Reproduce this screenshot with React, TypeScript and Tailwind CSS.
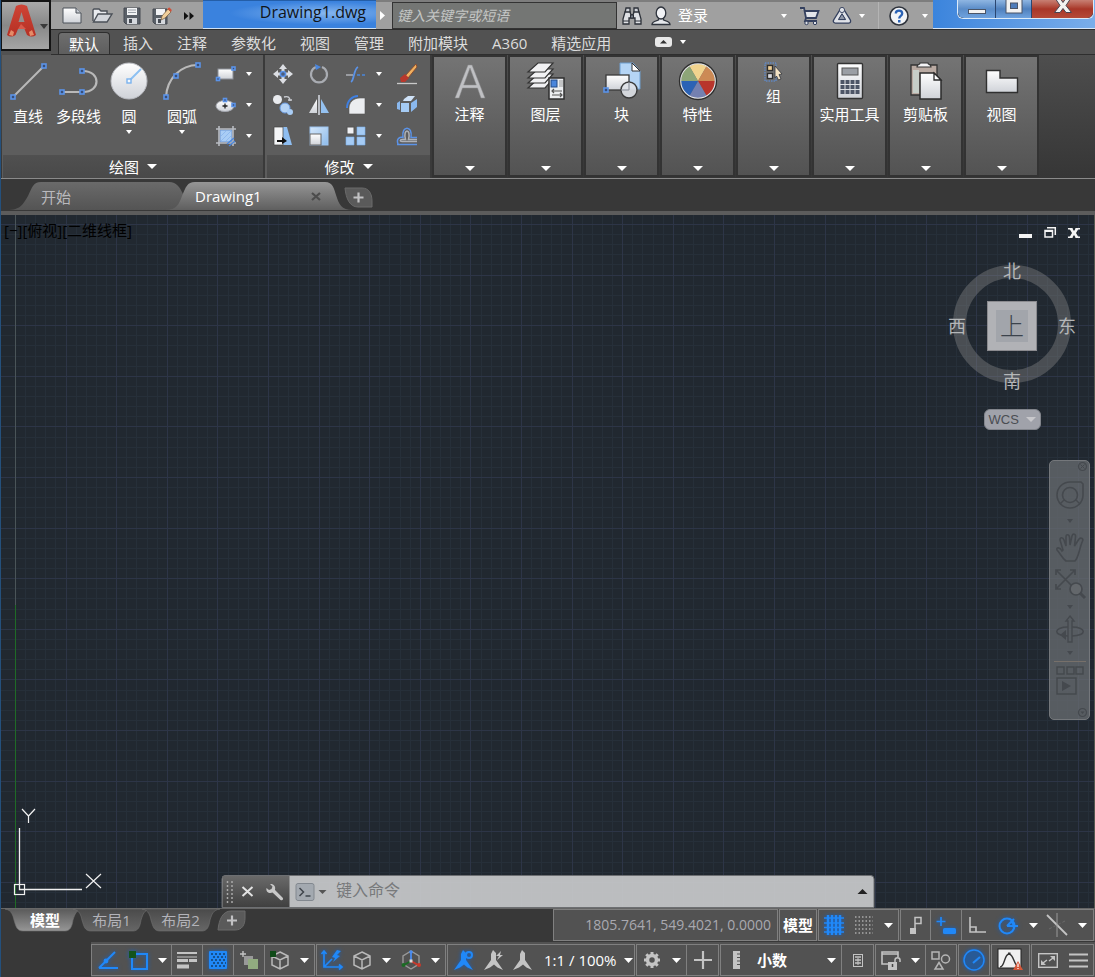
import React from "react";

type Kids = { children?: React.ReactNode };

/* ---------- shared drawing helpers ---------- */

function Pic({ w, h, children, glow }: Kids & { w: number; h: number; glow?: boolean }) {
  return (
    <svg
      width={w}
      height={h}
      viewBox={`0 0 ${w} ${h}`}
      fill="none"
      aria-hidden="true"
      className={glow ? "shrink-0 overflow-visible [filter:drop-shadow(0_0_2px_#1560c0)]" : "shrink-0 overflow-visible"}
    >
      {children}
    </svg>
  );
}

function Arrow({ w = 6, h = 4, fill = "#fff" }: { w?: number; h?: number; fill?: string }) {
  return (
    <Pic w={w} h={h}>
      <path d={`M0 0H${w}L${w / 2} ${h}Z`} fill={fill} />
    </Pic>
  );
}

function Defs() {
  return (
    <svg width="0" height="0" className="absolute" aria-hidden="true">
      <defs>
        <linearGradient id="paper" x1="0" y1="0" x2="0" y2="1">
          <stop offset="0" stopColor="#ffffff" />
          <stop offset="1" stopColor="#cfd2d8" />
        </linearGradient>
        <linearGradient id="sky" x1="0" y1="0" x2="1" y2="1">
          <stop offset="0" stopColor="#d6e8fb" />
          <stop offset="1" stopColor="#8dbbea" />
        </linearGradient>
        <linearGradient id="tab" x1="0" y1="0" x2="0" y2="1">
          <stop offset="0" stopColor="#6a6a6a" />
          <stop offset="1" stopColor="#545454" />
        </linearGradient>
        <linearGradient id="tabOn" x1="0" y1="0" x2="0" y2="1">
          <stop offset="0" stopColor="#969696" />
          <stop offset="1" stopColor="#5f5f5f" />
        </linearGradient>
        <linearGradient id="tabLow" x1="0" y1="0" x2="0" y2="1">
          <stop offset="0" stopColor="#5a5a5a" />
          <stop offset="1" stopColor="#969696" />
        </linearGradient>
        <linearGradient id="tabDim" x1="0" y1="0" x2="0" y2="1">
          <stop offset="0" stopColor="#4a4a4a" />
          <stop offset="1" stopColor="#666666" />
        </linearGradient>
        <linearGradient id="redA" x1="0" y1="0" x2="0" y2="1">
          <stop offset="0" stopColor="#cf4436" />
          <stop offset="1" stopColor="#b53024" />
        </linearGradient>
      </defs>
    </svg>
  );
}

function Node({ x, y, s = 4 }: { x: number; y: number; s?: number }) {
  return <rect x={x - s / 2} y={y - s / 2} width={s} height={s} stroke="#5b93e8" strokeWidth="1.6" fill="#3a4f78" />;
}

/* ---------- title bar ---------- */

function Tool({ label, cls, children }: Kids & { label: string; cls: string }) {
  return (
    <button type="button" aria-label={label} className={`flex h-full shrink-0 items-center justify-center ${cls}`}>
      {children}
    </button>
  );
}

function TitleBar() {
  return (
    <div className="flex h-[30px] border-b border-[#2c2c2c] bg-[#a0a0a0]">
      <div className="flex w-[152px] shrink-0 items-center border-t-2 border-[#7d7d7d] pl-1.5">
        <Tool label="新建" cls="w-[30px]">
          <Pic w={20} h={17}>
            <path d="M1 1H14L19 6V16H1Z" fill="url(#paper)" stroke="#4b5058" />
            <path d="M14 1V6H19" fill="#c5c9d0" stroke="#4b5058" />
          </Pic>
        </Tool>
        <Tool label="打开" cls="w-[30px]">
          <Pic w={21} h={15}>
            <path d="M1 13V2L2 1H7L9 3H15V6" fill="#e8eaee" stroke="#4b5058" strokeWidth="1.4" />
            <path d="M1.5 14L6 6H20L15 14Z" fill="#d2d5db" stroke="#4b5058" strokeWidth="1.4" />
          </Pic>
        </Tool>
        <Tool label="保存" cls="w-[30px]">
          <Pic w={18} h={18}>
            <path d="M1 1H17V17H3L1 15Z" fill="#5a6068" stroke="#464b53" />
            <rect x="4" y="1" width="10" height="7" fill="#f2f3f5" />
            <path d="M5 3H13M5 5.500H13" stroke="#9aa0a8" />
            <rect x="4" y="11" width="10" height="6" fill="#d5d8dd" />
            <rect x="6" y="12" width="3" height="4" fill="#464b53" />
          </Pic>
        </Tool>
        <Tool label="另存为" cls="w-[30px]">
          <Pic w={20} h={18}>
            <path d="M1 2H15V17H3L1 15Z" fill="#5a6068" stroke="#464b53" />
            <rect x="4" y="2" width="9" height="6" fill="#f2f3f5" />
            <rect x="4" y="11" width="9" height="6" fill="#d5d8dd" />
            <rect x="6" y="12" width="3" height="4" fill="#464b53" />
            <path d="M9 13L10 9L16 2L19 5L13 11Z" fill="#f1cf9b" stroke="#7c6648" strokeWidth=".8" />
            <path d="M16 1L17.500 0.500L19.800 3L19 5L15.500 2Z" fill="#d0503a" />
          </Pic>
        </Tool>
        <Tool label="更多工具" cls="w-6">
          <Pic w={10} h={8}>
            <path d="M0 0L4.500 4L0 8ZM5.500 0L10 4L5.500 8Z" fill="#111" />
          </Pic>
        </Tool>
      </div>
      <div className="flex w-[173px] shrink-0 items-start justify-end border-t border-b border-t-[#245ea8] border-b-[#cfe2f6] bg-[#3a84e0] bg-radial-[at_70%_45%] from-[#86b6ef] to-[#3a82de] to-55% pr-2.5">
        <h1 className="text-base leading-[22px] text-[#101418]">Drawing1.dwg</h1>
      </div>
      <div className="flex min-w-0 flex-1 items-center border-t-2 border-[#7d7d7d]">
        <Tool label="展开搜索" cls="w-4 pr-1">
          <Pic w={5} h={9}>
            <path d="M0 0L5 4.500L0 9Z" fill="#fff" />
          </Pic>
        </Tool>
        <input
          aria-label="搜索"
          placeholder="键入关键字或短语"
          className="h-full w-[225px] border border-[#333] bg-[#747674] px-1 text-sm italic text-white outline-none placeholder:text-[#c4c6c4]"
        />
        <Tool label="查找" cls="w-[30px]">
          <Pic w={20} h={18}>
            <path d="M3 6L4 1H8V6M12 6V1H16L17 6" fill="#cfd2d8" stroke="#2c3038" strokeWidth="1.300" />
            <path d="M1 17V12L3 5H8L9 8H11L12 5H17L19 12V17H13V11H7V17Z" fill="#dfe1e5" stroke="#2c3038" strokeWidth="1.300" />
            <path d="M8.500 8H11.500V11H8.500ZM1 14H7M13 14H19" fill="#777d88" stroke="#2c3038" />
          </Pic>
        </Tool>
        <button type="button" className="flex h-full items-center gap-[7px] pl-1 text-[15px] text-white">
          <Pic w={20} h={20}>
            <path d="M1 18.500C1 15.500 4 15 7.500 14V12H12.500V14C16 15 19 15.500 19 18.500Z" fill="#e6e8ec" stroke="#2f343d" strokeWidth="1.300" />
            <ellipse cx="10" cy="7" rx="4.800" ry="6" fill="#f1f2f5" stroke="#2f343d" strokeWidth="1.300" />
          </Pic>
          登录
        </button>
        <div className="flex-1" />
        <Tool label="登录选项" cls="w-3">
          <Arrow />
        </Tool>
        <Tool label="购物车" cls="w-10">
          <Pic w={20} h={18}>
            <path d="M0 1H4L6 11H16L18.500 4H5" fill="#e3e5ea" stroke="#34405e" strokeWidth="1.800" />
            <path d="M6 11L5 14H17" stroke="#34405e" strokeWidth="1.800" />
            <circle cx="6.500" cy="16" r="1.700" fill="#dfe2e8" stroke="#34405e" />
            <circle cx="15" cy="16" r="1.700" fill="#dfe2e8" stroke="#34405e" />
          </Pic>
        </Tool>
        <Tool label="应用商店" cls="w-6">
          <Pic w={20} h={18}>
            <path d="M10 3.500L3.500 14H16.500Z" stroke="#34405e" strokeWidth="5.500" strokeLinejoin="round" />
            <path d="M10 3.500L3.500 14H16.500Z" stroke="#dfe2e8" strokeWidth="3" strokeLinejoin="round" />
            <path d="M10 6.800L6.500 12.600H13.500Z" fill="#8f97a8" stroke="#34405e" />
            <circle cx="10" cy="3" r="2.600" fill="#dfe2e8" stroke="#34405e" strokeWidth=".9" />
          </Pic>
        </Tool>
        <Tool label="应用选项" cls="w-4">
          <Arrow />
        </Tool>
        <div className="ml-2 h-full w-px bg-[#b4b4b4]" />
        <Tool label="帮助" cls="w-10">
          <Pic w={20} h={20}>
            <circle cx="10" cy="10" r="9" fill="#f2f4f7" stroke="#2f343d" strokeWidth="1.600" />
            <path d="M6.800 7.600C6.800 3.600 13.200 3.800 13.200 7.400C13.200 9.800 10.200 9.800 10.200 12.400" stroke="#2a62b5" strokeWidth="2.300" />
            <rect x="9" y="14" width="2.500" height="2.500" fill="#2a62b5" />
          </Pic>
        </Tool>
        <Tool label="帮助选项" cls="w-3.5 pr-0.5">
          <Arrow />
        </Tool>
      </div>
      <div className="flex w-[162px] shrink-0 items-start justify-end border-b border-[#d6e6f8] bg-linear-to-r from-[#3b84dc] to-[#7aaeea] pr-px">
        <div className="flex h-[19px] rounded-b-md border border-t-0 border-[#dcebfa] bg-[#22344f]">
          <button type="button" aria-label="最小化" className="flex w-[38px] items-end justify-center rounded-bl-md border-r border-[#2a4670] bg-linear-to-b from-[#8fb6e2] via-[#5a8cc8] to-[#6fa2de] pb-1">
            <Pic w={18} h={5}>
              <rect x=".5" y=".5" width="17" height="4" fill="#f2f2f2" stroke="#4a5568" />
            </Pic>
          </button>
          <button type="button" aria-label="最大化" className="flex w-9 items-start justify-center border-r border-[#2a4670] bg-linear-to-b from-[#8fb6e2] via-[#4f80bd] to-[#6fa2de]">
            <Pic w={18} h={14}>
              <rect x="1" y="-2" width="16" height="15" fill="#f2f2f2" stroke="#4a5568" />
              <rect x="5.500" y="3" width="7" height="5.500" fill="#4d7cba" stroke="#4a5568" />
            </Pic>
          </button>
          <button type="button" aria-label="关闭" className="flex w-[61px] items-start justify-center rounded-br-md bg-linear-to-b from-[#c77f73] via-[#a83628] to-[#b54a38]">
            <Pic w={18} h={13}>
              <path d="M1 -2H6L9 2.500L12 -2H17L12 5.500L17.500 12.500H12L9 8.500L6 12.500H.5L6 5.500Z" fill="#f2f2f2" stroke="#4a4450" />
            </Pic>
          </button>
        </div>
      </div>
    </div>
  );
}

const MENUS = ["插入", "注释", "参数化", "视图", "管理", "附加模块", "A360", "精选应用"];

function MenuTabs() {
  return (
    <nav className="flex h-[25px] items-end border-b border-[#2e2e2e] bg-[#525252] pl-[7px] text-[15px] text-[#dcdcdc]">
      <button type="button" className="h-[22px] rounded-t-sm border border-b-0 border-[#2e2e2e] bg-linear-to-b from-[#6e6e6e] to-[#5e5e5e] px-2.5 leading-5 text-white">
        默认
      </button>
      <div className="flex pl-px">
        {MENUS.map((m) => (
          <button key={m} type="button" className="px-3 leading-[22px]">
            {m}
          </button>
        ))}
      </div>
      <button type="button" aria-label="功能区显示" className="ml-8 flex h-full items-center gap-2">
        <Pic w={17} h={10}>
          <rect width="17" height="10" rx="3" fill="#e8e8e8" />
          <path d="M5 6.500L8.500 3L12 6.500Z" fill="#333" />
        </Pic>
        <Arrow />
      </button>
    </nav>
  );
}

function Header() {
  return (
    <header className="flex bg-[#525252]">
      <button
        type="button"
        aria-label="应用程序菜单"
        className="flex h-[51px] w-[50px] shrink-0 items-start gap-[3px] border-2 border-l border-[#141414] bg-linear-to-b from-[#a9a9a9] via-[#888] to-[#a5a5a5] pt-0.5 pl-1"
      >
        <Pic w={31} h={34}>
          <path d="M1 31L10 2Q15.500 -1 21 2L30 31Q26 34 21 31L18.500 25H12L9.500 31Q5 34 1 31Z" fill="url(#redA)" />
          <path d="M12.500 18L15.500 8L18.500 18Z" fill="#93908e" />
          <path d="M3 31L5 26L8 28L7 32ZM28 31L26 26L23 28L24 32Z" fill="#e58b68" />
          <path d="M12 25L15 20L20 25Z" fill="#d8594a" />
        </Pic>
        <span className="pt-5">
          <Arrow w={8} h={5} fill="#3a3a3a" />
        </span>
      </button>
      <div className="min-w-0 flex-1">
        <TitleBar />
        <MenuTabs />
      </div>
    </header>
  );
}

/* ---------- ribbon ---------- */

function BigTool({ label, cls, arrow, children }: Kids & { label: string; cls: string; arrow?: boolean }) {
  return (
    <button type="button" className={`flex shrink-0 flex-col items-center whitespace-nowrap ${cls}`}>
      {children}
      <span className="mt-[5px] mb-1 leading-5">{label}</span>
      {arrow && <Arrow />}
    </button>
  );
}

function Cell({ label, children }: Kids & { label: string }) {
  return (
    <button type="button" aria-label={label} className="flex items-center justify-center">
      {children}
    </button>
  );
}

function PanelTitle({ children }: Kids) {
  return (
    <button type="button" className="flex h-[23px] w-full items-center justify-center gap-2 bg-linear-to-b from-[#505050] to-[#494949] leading-5">
      {children}
      <Arrow w={10} h={5} />
    </button>
  );
}

function DrawPanel() {
  return (
    <section className="flex w-[263px] shrink-0 flex-col border-r-2 border-[#3a3a3a] bg-[#5d5d5d] pl-px">
      <div className="flex h-[100px] items-start pt-1">
        <BigTool label="直线" cls="w-[50px]">
          <Pic w={40} h={42}>
            <path d="M5 38L36 7" stroke="#b9b9b9" strokeWidth="2" />
            <Node x={5} y={38} />
            <Node x={36} y={7} />
          </Pic>
        </BigTool>
        <BigTool label="多段线" cls="w-[51px]">
          <Pic w={40} h={42}>
            <path d="M3 33H24C42 33 42 12 24 12" stroke="#b9b9b9" strokeWidth="2.200" />
            <Node x={3} y={33} />
            <Node x={23} y={33} />
            <Node x={23} y={12} />
          </Pic>
        </BigTool>
        <BigTool label="圆" cls="w-[50px]" arrow>
          <Pic w={40} h={42}>
            <circle cx="20" cy="22" r="18" fill="url(#paper)" stroke="#b8bac0" />
            <path d="M20 22L32 10" stroke="#8cc0f2" strokeWidth="2" />
            <rect x="18" y="20" width="4" height="4" fill="#f5f9fd" stroke="#7ab3ee" strokeWidth="1.400" />
          </Pic>
        </BigTool>
        <BigTool label="圆弧" cls="w-14" arrow>
          <Pic w={40} h={42}>
            <path d="M4 38C5 20 18 6 36 6" stroke="#b9b9b9" strokeWidth="2.200" />
            <Node x={4} y={38} />
            <Node x={14} y={17} />
            <Node x={36} y={6} />
          </Pic>
        </BigTool>
        <div className="grid h-[92px] grid-cols-[32px_14px] grid-rows-3">
          <Cell label="矩形">
            <Pic w={20} h={16}>
              <rect x="2" y="3" width="15" height="10" fill="url(#paper)" stroke="#8b8f98" />
              <Node x={2} y={13} s={3} />
              <Node x={17.500} y={2.500} s={3} />
            </Pic>
          </Cell>
          <Cell label="矩形选项"><Arrow /></Cell>
          <Cell label="椭圆">
            <Pic w={20} h={16}>
              <ellipse cx="9" cy="9" rx="9" ry="5.500" fill="url(#paper)" stroke="#a5a8b0" />
              <path d="M9 6.500V11.500M6.500 9H11.500" stroke="#222" strokeWidth="1.300" />
              <Node x={9} y={3} s={3} />
              <Node x={17.500} y={8} s={3} />
            </Pic>
          </Cell>
          <Cell label="椭圆选项"><Arrow /></Cell>
          <Cell label="图案填充">
            <Pic w={20} h={20}>
              <rect x="4" y="4" width="12" height="12" fill="#a9cdf5" stroke="#6a93cf" />
              <path d="M5 10L10 5M5 15L15 5M10 15L15 10" stroke="#8fb9ee" />
              <path d="M0 3H20M3 0V20M17 0V20M0 17H20" stroke="#b9bcc2" strokeWidth="1.600" />
              <path d="M11 18L18 12M13 20L19 15" stroke="#4a86dc" strokeWidth="1.300" />
            </Pic>
          </Cell>
          <Cell label="填充选项"><Arrow /></Cell>
        </div>
      </div>
      <PanelTitle>绘图</PanelTitle>
    </section>
  );
}

function ModifyPanel() {
  return (
    <section className="flex w-[167px] shrink-0 flex-col border-r-2 border-[#3a3a3a] bg-[#5d5d5d] pl-0.5">
      <div className="flex h-[100px] items-start pt-1">
        <div className="grid h-[92px] grid-cols-[32px_40px_34px_12px_44px] grid-rows-3">
          <Cell label="移动">
            <Pic w={20} h={20}>
              <path d="M10 0L14 5H11.500V8H8.500V5H6ZM10 20L14 15H11.500V12H8.500V15H6ZM0 10L5 6V8.500H8V11.500H5V14ZM20 10L15 6V8.500H12V11.500H15V14Z" fill="#dcdee3" />
              <circle cx="10" cy="10" r="2.600" fill="#4d5d7c" stroke="#5b93e8" strokeWidth="1.500" />
            </Pic>
          </Cell>
          <Cell label="旋转">
            <Pic w={20} h={20}>
              <path d="M13 3A8 8 0 1 1 7 3" stroke="#a9acb2" strokeWidth="2.200" />
              <path d="M6 0L12 3L7 6Z" fill="#4a86dc" />
            </Pic>
          </Cell>
          <Cell label="修剪">
            <Pic w={20} h={16}>
              <path d="M0 9H7" stroke="#a9acb2" strokeWidth="1.600" />
              <path d="M11 9H20" stroke="#4a86dc" strokeWidth="1.400" strokeDasharray="3 2" />
              <path d="M5 16C7 15 7 12 8 9C9 5 10 2 12 1" stroke="#5b93e8" strokeWidth="1.800" />
            </Pic>
          </Cell>
          <Cell label="修剪选项"><Arrow /></Cell>
          <Cell label="删除">
            <Pic w={20} h={20}>
              <path d="M8 12L19 0L20 3L11 14Z" fill="#f0b060" stroke="#8a4a2a" strokeWidth=".9" />
              <path d="M3 14L8 10L12 14L8 18L4 18Z" fill="#b8382c" />
              <path d="M0 19.500H20" stroke="#c9c9c9" strokeWidth="1.300" />
            </Pic>
          </Cell>
          <Cell label="复制">
            <Pic w={20} h={20}>
              <circle cx="4.500" cy="4.500" r="4.500" fill="#e9ebef" />
              <circle cx="12" cy="13" r="5" fill="#b5d3f5" stroke="#6a9be0" />
              <circle cx="17" cy="17" r="3" fill="#a9cdf5" />
              <path d="M11 2C15 1 17 2 17 6M15 5H19" stroke="#c9ccd2" strokeWidth="1.300" />
            </Pic>
          </Cell>
          <Cell label="镜像">
            <Pic w={20} h={20}>
              <path d="M0 18L8 4V18Z" fill="url(#paper)" />
              <path d="M20 18L12 4V18Z" fill="#94c1f0" />
              <path d="M10 0V20" stroke="#b9bcc2" strokeWidth="2" />
            </Pic>
          </Cell>
          <Cell label="圆角">
            <Pic w={20} h={20}>
              <path d="M3 19V13C3 7 8 3 14 3H19V19Z" fill="#ebedf0" stroke="#555" strokeWidth=".6" />
              <path d="M1 13C1 6 6 1 12 1" stroke="#3f7fe0" strokeWidth="2" />
            </Pic>
          </Cell>
          <Cell label="圆角选项"><Arrow /></Cell>
          <Cell label="分解">
            <Pic w={20} h={20}>
              <path d="M7 4L11 1H18L14 6H6Z" fill="#cfe2f8" />
              <path d="M4 8H12V17H4Z" fill="#a5cbf4" />
              <path d="M0 8L3 6V15L0 14ZM14 8L20 4V12L14 17Z" fill="#8ab8ee" />
            </Pic>
          </Cell>
          <Cell label="拉伸">
            <Pic w={20} h={20}>
              <path d="M9 1H14L19 19H9Z" fill="#8ebdf0" />
              <path d="M1 1H10V19H1Z" fill="#f3f4f6" stroke="#444" strokeWidth=".7" />
              <path d="M4 14H9V11L14 15L9 18V16H4Z" fill="#111" />
            </Pic>
          </Cell>
          <Cell label="缩放">
            <Pic w={20} h={20}>
              <rect x="1" y="1" width="18" height="18" fill="url(#sky)" stroke="#9cc4f0" />
              <rect x="1" y="8" width="11" height="11" fill="url(#paper)" stroke="#666" />
            </Pic>
          </Cell>
          <Cell label="阵列">
            <Pic w={20} h={20}>
              <rect x="1" y="1" width="7" height="7" fill="#f0f1f4" stroke="#555" />
              <path d="M11 1H19V9H11ZM0 11H8V19H0ZM11 11H19V19H11Z" fill="#a5cbf4" stroke="#7aaeea" strokeWidth=".6" />
            </Pic>
          </Cell>
          <Cell label="阵列选项"><Arrow /></Cell>
          <Cell label="偏移">
            <Pic w={20} h={20}>
              <path d="M0 18.500H20M1 18C-1 12 3 11 6 11.500C4 -1 16 -1 14 11.500H20" stroke="#5b93e8" strokeWidth="1.500" />
              <path d="M20 15.500H5C2.500 15.500 3 13.500 5 13.500H8.500C5.500 2 14.500 2 11.500 13.500H20" stroke="#aeb1b7" strokeWidth="1.500" />
            </Pic>
          </Cell>
        </div>
      </div>
      <PanelTitle>修改</PanelTitle>
    </section>
  );
}

function wedge(i: number) {
  const a = ((i * 60 - 120) * Math.PI) / 180;
  const b = ((i * 60 - 60) * Math.PI) / 180;
  const p = (t: number) => `${(19 + 17 * Math.cos(t)).toFixed(2)} ${(19 + 17 * Math.sin(t)).toFixed(2)}`;
  return `M19 19L${p(a)}A17 17 0 0 1 ${p(b)}Z`;
}
const WHEEL = ["#f1d38e", "#cc8a55", "#b8352c", "#7480b0", "#2b62b5", "#8da578"];

const PANELS: { name: string; icon: React.ReactNode }[] = [
  {
    name: "注释",
    icon: (
      <Pic w={38} h={38}>
        <path d="M4 36L17 3H21L34 36H30L26.500 26H11.500L8 36ZM12.700 23H25.300L19 6Z" fill="#bfc0c3" stroke="#8c8c8e" strokeWidth=".5" />
      </Pic>
    ),
  },
  {
    name: "图层",
    icon: (
      <Pic w={38} h={38}>
        {[17, 12, 7, 1].map((y) => (
          <path key={y} d={`M1 ${y + 9}L11 ${y}H26L18 ${y + 9}Z`} fill="#f1f1f3" stroke="#333" strokeWidth="1.200" />
        ))}
        <rect x="22" y="16" width="15" height="21" fill="#eceef1" stroke="#2f2f2f" strokeWidth="1.500" />
        <rect x="24" y="18" width="6" height="7" fill="#4a86dc" stroke="#234a86" />
        <path d="M33 18V25M35 18V25" stroke="#999" />
        <path d="M25 29H35M27 27L25 29L27 31M25 33H35M33 31L35 33L33 35" stroke="#555" strokeWidth="1.200" />
      </Pic>
    ),
  },
  {
    name: "块",
    icon: (
      <Pic w={38} h={38}>
        <path d="M17 1H30L37 9V27H17Z" fill="#b5d5f5" stroke="#6f9fd0" />
        <path d="M29 1V9H37Z" fill="#fff" stroke="#333" />
        <rect x="3" y="13" width="23" height="15" fill="url(#paper)" stroke="#3a3a3a" strokeWidth="1.300" />
        <circle cx="26" cy="28" r="8" fill="#dfe2e8" fillOpacity=".9" stroke="#3a3a3a" strokeWidth="1.400" />
        <path d="M18 28H26V20" stroke="#8a8f9a" />
        <Node x={3} y={28} />
      </Pic>
    ),
  },
  {
    name: "特性",
    icon: (
      <Pic w={38} h={38}>
        {WHEEL.map((c, i) => (
          <path key={c} d={wedge(i)} fill={c} />
        ))}
        <circle cx="19" cy="19" r="17.500" stroke="#e3e4e6" strokeWidth="1.500" />
        <circle cx="19" cy="19" r="18.500" stroke="#2d2d2d" strokeWidth="1.300" />
      </Pic>
    ),
  },
  {
    name: "组",
    icon: (
      <Pic w={20} h={20}>
        <rect x="1" y="1" width="11" height="18" stroke="#5b93e8" strokeDasharray="1.500 1" />
        <rect x="3.500" y="3.500" width="5" height="5" fill="#f0cf95" stroke="#2e2e2e" strokeWidth="1.300" />
        <rect x="3.500" y="11.500" width="5" height="5" fill="#d7d9de" stroke="#2e2e2e" strokeWidth="1.300" />
        <path d="M11 4L18 12L15 12.500L17 17L14.500 18L12.500 14L11 16Z" fill="#f3e2c3" stroke="#30343c" strokeWidth=".8" />
      </Pic>
    ),
  },
  {
    name: "实用工具",
    icon: (
      <Pic w={38} h={38}>
        <rect x="6.500" y="1.500" width="25" height="35" rx="1" fill="url(#paper)" stroke="#333" strokeWidth="1.400" />
        <rect x="11" y="6" width="16" height="7" fill="#9a9ea4" stroke="#555" />
        {[18, 23, 28].map((y) => (
          <path key={y} d={`M9.500 ${y + 2}H28.500`} stroke="#4d5566" strokeWidth="4" strokeDasharray="4 1" />
        ))}
      </Pic>
    ),
  },
  {
    name: "剪贴板",
    icon: (
      <Pic w={38} h={38}>
        <path d="M4 3H30V33H4Z" fill="#b9aaa2" stroke="#333" strokeWidth="1.300" />
        <path d="M6 8H12V31H6Z" fill="#c6cec8" />
        <path d="M10 5C10 2 13 3 13 1H21C21 3 24 2 24 5Z" fill="#f4f4f6" stroke="#333" strokeWidth="1.200" />
        <path d="M13 11H27L34 18V37H13Z" fill="url(#paper)" stroke="#2b2b2b" strokeWidth="1.500" />
        <path d="M27 11V18H34Z" fill="#fff" stroke="#2b2b2b" strokeWidth="1.300" />
      </Pic>
    ),
  },
  {
    name: "视图",
    icon: (
      <Pic w={38} h={38}>
        <path d="M3.500 8.500H17V16H34.500V30.500H3.500Z" fill="url(#paper)" stroke="#303030" strokeWidth="1.400" />
      </Pic>
    ),
  },
];

function Ribbon() {
  return (
    <div className="flex border-b border-[#8a8a8a] bg-linear-to-b from-[#4e4e4e] to-[#363636] pl-px text-[15px] text-white">
      <DrawPanel />
      <ModifyPanel />
      {PANELS.map((p) => (
        <button
          key={p.name}
          type="button"
          className="mr-px flex h-[122px] w-[75px] shrink-0 flex-col items-center border-2 border-[#333] bg-linear-to-b from-[#747474] to-[#535353] pt-[5px] whitespace-nowrap"
        >
          {p.icon}
          <span className="mt-1 leading-5">{p.name}</span>
          <span className="mt-auto mb-1">
            <Arrow w={10} h={5} />
          </span>
        </button>
      ))}
    </div>
  );
}

/* ---------- file tabs ---------- */

function FileTabs() {
  return (
    <div className="flex h-9 items-start border-b-4 border-[#5c5c5c] bg-[#383838] pt-[3px] text-[15px]">
      <button type="button" className="relative h-7 w-[162px] shrink-0 pl-10 text-left leading-[30px] text-[#b9b9bd]">
        <span className="absolute top-0 left-0">
          <Pic w={196} h={28}>
            <path d="M6 28C20 28 22 22 27 14C31 6 32 0 40 0H168C176 0 179 6 182 12C186 22 188 28 196 28Z" fill="url(#tab)" />
          </Pic>
        </span>
        <span className="relative">开始</span>
      </button>
      <button type="button" className="relative flex h-7 w-[182px] shrink-0 items-center justify-between pr-6 pl-8 text-white">
        <span className="absolute top-0 left-0">
          <Pic w={190} h={28}>
            <path d="M2 28C14 28 16 22 19 14C23 5 24 0 32 0H162C170 0 171 7 173 13C176 22 178 28 190 28Z" fill="url(#tabOn)" />
          </Pic>
        </span>
        <span className="relative leading-7">Drawing1</span>
        <span className="relative">
          <Pic w={10} h={9}>
            <path d="M1 1L9 8M9 1L1 8" stroke="#4c4c4c" strokeWidth="2.200" />
          </Pic>
        </span>
      </button>
      <button type="button" aria-label="新图形" className="mt-1.5">
        <Pic w={28} h={20}>
          <path d="M0 0H17C24 0 27 6 27 13V19H13C5 19 1 11 0 0Z" fill="#5a5a5a" stroke="#6a6a6a" />
          <path d="M13.500 4.500V14.500M8.500 9.500H18.500" stroke="#c2c2c4" strokeWidth="2.200" />
        </Pic>
      </button>
    </div>
  );
}

/* ---------- drawing area ---------- */

const STEP = 50.6;
const COUNT = 200;

function Grid() {
  const lines = Array.from({ length: COUNT }, (_, i) => i);
  const minor = lines
    .map((i) => `M${Math.round(14 + (i * STEP) / 5) + 0.5} 0V4000M0 ${Math.round(9 + ((i - 5) * STEP) / 5) + 0.5}H4000`)
    .join("");
  const major = lines
    .slice(0, 60)
    .map((i) => `M${Math.round(14 + i * STEP) + 0.5} 0V4000M0 ${Math.round(9 + i * STEP) + 0.5}H4000`)
    .join("");
  return (
    <svg className="absolute inset-0 h-full w-full" aria-hidden="true">
      <path d={minor} stroke="#262f39" />
      <path d={major} stroke="#2d3547" />
      <path d="M14.500 0V4000" stroke="#4a5458" />
      <path d="M14.500 390V4000" stroke="#1f6b26" />
    </svg>
  );
}

function Ucs() {
  return (
    <div className="absolute bottom-3 left-3">
      <Pic w={92} h={88}>
        <path d="M6.500 20V81.500H69" stroke="#f0f0f0" strokeWidth="1.300" />
        <rect x="1.500" y="76.500" width="10" height="10" stroke="#f0f0f0" strokeWidth="1.200" />
        <path d="M9 1L15.500 8L22 1M15.500 8V15M73 66L88 80M88 66L73 80" stroke="#f0f0f0" strokeWidth="1.200" />
      </Pic>
    </div>
  );
}

function Compass() {
  return (
    <div className="absolute top-10 right-[13px] flex w-[138px] flex-col items-center text-lg leading-6 text-[#b4b6b8]">
      <div className="relative flex h-[138px] w-full flex-col items-center justify-between pt-1">
        <span className="absolute top-2.5 left-2.5">
          <Pic w={118} h={118}>
            <circle cx="59" cy="59" r="52.500" stroke="#8e8e8e" strokeOpacity=".38" strokeWidth="13" />
          </Pic>
        </span>
        <span className="relative">北</span>
        <div className="relative flex w-full items-center justify-between px-[5px]">
          <span>西</span>
          <div className="flex h-[50px] w-[50px] items-center justify-center border border-[#8b8b8f] bg-[#b1b2b6]">
            <span className="flex h-8 w-8 items-center justify-center bg-[#a2a5ab] text-2xl font-light text-[#3c434c]">上</span>
          </div>
          <span>东</span>
        </div>
        <span className="relative">南</span>
      </div>
      <button type="button" className="mt-4 flex h-[21px] w-[57px] items-center justify-between rounded-md border border-[#82858c] bg-[#a0a2aa] px-1 font-['Liberation_Sans',sans-serif] text-[13px] text-[#4a4d52]">
        WCS
        <Arrow w={10} h={5} fill="#c8c8cc" />
      </button>
    </div>
  );
}

function NavBar() {
  const c = "#45494e";
  return (
    <div className="absolute top-[245px] right-1 flex h-[260px] w-[41px] flex-col items-center rounded-[5px] border border-[#74777b] bg-[#6a6d71]/75">
      <button type="button" aria-label="关闭导航栏" className="mt-px mr-0.5 self-end">
        <Pic w={9} h={9}>
          <circle cx="4.500" cy="4.500" r="4" stroke={c} strokeWidth="1.200" />
          <path d="M2.500 2.500L6.500 6.500M6.500 2.500L2.500 6.500" stroke={c} />
        </Pic>
      </button>
      <button type="button" aria-label="控制盘" className="mt-2.5 flex flex-col items-center gap-2.5">
        <Pic w={28} h={28}>
          <path d="M14 1H25L27 3V14A13 13 0 1 1 14 1Z" stroke={c} strokeWidth="1.600" />
          <circle cx="14" cy="14" r="7.500" stroke={c} strokeWidth="1.600" />
          <path d="M8 19L4 23M20 19L24 23" stroke={c} strokeWidth="1.400" />
        </Pic>
        <Arrow fill={c} />
      </button>
      <button type="button" aria-label="平移" className="mt-2.5">
        <Pic w={28} h={30}>
          <path d="M10 28C6 25 4 20 1 17C0 14 4 14 6 18L7 17L4 7C4 4 7 4 8 7L10 13L10 4C10 1 13 1 13.500 4L14 12L16 3C17 0 20 1 19.500 4L18.500 13L23 6C25 4 28 6 26.500 8C23 16 23 24 19 28Z" stroke={c} strokeWidth="1.600" />
        </Pic>
      </button>
      <button type="button" aria-label="范围缩放" className="mt-1.5 flex flex-col items-center gap-1.5">
        <Pic w={30} h={30}>
          <path d="M1 1L20 20M20 1L1 20M1 6V1H6M15 1H20V6M1 15V20H6" stroke={c} strokeWidth="1.700" />
          <circle cx="21" cy="20" r="6" fill="#63676b" stroke={c} strokeWidth="1.700" />
          <path d="M25 24L30 29" stroke={c} strokeWidth="3" />
        </Pic>
        <Arrow fill={c} />
      </button>
      <button type="button" aria-label="动态观察" className="mt-1.5 flex flex-col items-center gap-2">
        <Pic w={28} h={28}>
          <path d="M14 1L18 6H16V27H12V6H10Z" stroke={c} strokeWidth="1.400" />
          <path d="M12 12C-3 12 -3 21 12 21M16 12C31 12 31 21 16 21" stroke={c} strokeWidth="1.600" />
          <path d="M4 20L10 15V25Z" fill={c} />
        </Pic>
        <Arrow fill={c} />
      </button>
      <div className="mt-1.5 h-px w-8 bg-[#77706a]" />
      <button type="button" aria-label="ShowMotion" className="mt-1">
        <Pic w={28} h={30}>
          <path d="M1 1H8V8H1ZM11 1H18V8H11ZM20 1H27V8H20ZM1 12H20V28H1Z" stroke={c} strokeWidth="1.500" />
          <path d="M6 15L15 20L6 25Z" fill={c} />
        </Pic>
      </button>
      <button type="button" aria-label="导航栏选项" className="mt-auto mr-0.5 mb-0.5 self-end">
        <Pic w={9} h={9}>
          <circle cx="4.500" cy="4.500" r="4" stroke={c} strokeWidth="1.200" />
          <path d="M2.500 3.500H6.500L4.500 6Z" fill={c} />
        </Pic>
      </button>
    </div>
  );
}

function CommandLine() {
  return (
    <div className="absolute bottom-0 left-1/2 flex h-[33px] w-[653px] max-w-full -translate-x-1/2 items-center rounded-t-sm border border-[#6d6f72] bg-[#c9cacc]/92">
      <div className="flex h-full w-[67px] shrink-0 items-center gap-2 bg-linear-to-b from-[#6a6a6a] to-[#404040] pl-1">
        <Pic w={7} h={22}>
          <path d="M1 0V22M5.500 0V22" stroke="#a9a9a9" strokeWidth="1.500" strokeDasharray="2 2" />
        </Pic>
        <button type="button" aria-label="关闭命令行">
          <Pic w={12} h={11}>
            <path d="M1 1L11 10M11 1L1 10" stroke="#e2e2e2" strokeWidth="2" />
          </Pic>
        </button>
        <button type="button" aria-label="自定义" className="pl-1">
          <Pic w={18} h={18}>
            <path d="M1 5C0 9 4 11 7 9.500L15 17C17 18 18.500 16 17 14.500L9.500 7C10.500 3 8 .5 4.500 1L7 3.500L6 6L3.500 7Z" fill="#c8c8c8" />
          </Pic>
        </button>
      </div>
      <button type="button" aria-label="近期命令" className="ml-1.5 flex items-center gap-1">
        <Pic w={19} h={18}>
          <rect x=".5" y=".5" width="18" height="17" rx="2" fill="#a3a9b0" stroke="#82888f" />
          <path d="M4 5L8 9L4 13M10 13H15" stroke="#3f454c" strokeWidth="1.500" />
        </Pic>
        <Arrow w={8} h={4} fill="#555" />
      </button>
      <input
        aria-label="命令"
        placeholder="键入命令"
        className="h-full min-w-0 flex-1 bg-transparent px-2.5 pb-1 text-base text-[#222] outline-none placeholder:text-[#77797b]"
      />
      <button type="button" aria-label="展开历史" className="mr-1.5">
        <Pic w={10} h={5}>
          <path d="M0 5H10L5 0Z" fill="#222" />
        </Pic>
      </button>
    </div>
  );
}

function Canvas() {
  return (
    <main className="relative min-h-[600px] flex-1 overflow-hidden border-r border-[#55584f] bg-[#212830]">
      <Grid />
      <p className="relative w-fit pt-[5px] pl-[3px] text-[15px] leading-5 text-black">[−][俯视][二维线框]</p>
      <div className="absolute top-3 right-3.5 flex items-center gap-3">
        <button type="button" aria-label="最小化视口" className="pt-1.5">
          <Pic w={13} h={4}>
            <rect width="13" height="4" fill="#f4f4f4" />
          </Pic>
        </button>
        <button type="button" aria-label="还原视口">
          <Pic w={12} h={11}>
            <path d="M3 .7H11.300V8M1 3.500H8.500V10H1Z" stroke="#f4f4f4" strokeWidth="1.500" />
            <path d="M1 4H8.500" stroke="#f4f4f4" strokeWidth="2" />
          </Pic>
        </button>
        <button type="button" aria-label="关闭视口">
          <Pic w={12} h={10}>
            <path d="M1 0H4L6 3L8 0H11L8 5L11 10H8L6 7L4 10H1L4 5Z" fill="#f4f4f4" />
            <path d="M0 .7H4.500M7.500 .7H12M0 9.300H4.500M7.500 9.300H12" stroke="#f4f4f4" strokeWidth="1.400" />
          </Pic>
        </button>
      </div>
      <Compass />
      <NavBar />
      <Ucs />
      <CommandLine />
    </main>
  );
}

/* ---------- footer ---------- */

function LayoutTab({ name, on }: { name: string; on?: boolean }) {
  return (
    <button type="button" className={on ? "relative h-[22px] w-16 font-bold text-white" : "relative h-[22px] w-[69px] text-[#b3b3b9]"}>
      <span className={on ? "absolute top-0 -left-2" : "absolute top-0 -left-1"}>
        <Pic w={78} h={23}>
          <path d="M0 0C7 1 8 7 9 11C11 18 12 22 18 22H60C65 22 67 18 68 11C70 5 71 1 78 0Z" fill={on ? "url(#tabLow)" : "url(#tabDim)"} stroke="#707070" strokeWidth=".6" />
        </Pic>
      </span>
      <span className="relative leading-[22px]">{name}</span>
    </button>
  );
}

function Box({ children }: Kids) {
  return <div className="flex h-full divide-x divide-[#808080] border border-[#808080]">{children}</div>;
}

function Item({ label, cls, children }: Kids & { label: string; cls: string }) {
  return (
    <button type="button" aria-label={label} className={`flex items-center justify-center ${cls}`}>
      {children}
    </button>
  );
}

const B = "#2088f8";
const G = "#c4c4c4";

function Cube() {
  return <path d="M9 1L17 5V14L9 18L1 14V5ZM1 5L9 9L17 5M9 9V18" stroke="#b9b9b9" strokeWidth="1.500" />;
}

function StatusTop() {
  return (
    <div className="flex h-8 gap-px text-[15px] text-white">
      <Box>
        <output className="flex w-[223px] items-center justify-end bg-[#525252] pr-1.5 text-sm text-[#a9a9b0]">1805.7641, 549.4021, 0.0000</output>
      </Box>
      <Box>
        <button type="button" className="w-9 font-bold">模型</button>
      </Box>
      <Box>
        <div className="flex">
          <Item label="栅格" cls="w-[30px]">
            <Pic w={20} h={20} glow>
              <path d="M4 0V20M8 0V20M12 0V20M16 0V20" stroke={B} strokeWidth="2.400" />
              <path d="M0 3H20M0 8H20M0 12.500H20M0 17H20" stroke={B} strokeWidth="1.400" />
            </Pic>
          </Item>
          <Item label="捕捉" cls="w-[30px]">
            <Pic w={18} h={18}>
              <path d="M0 1H18M0 5H18M0 9H18M0 13H18M0 17H18" stroke="#aaa" strokeWidth="1.500" strokeDasharray="1.500 2" />
            </Pic>
          </Item>
          <Item label="捕捉选项" cls="w-[19px]"><Arrow w={9} h={5} /></Item>
        </div>
      </Box>
      <Box>
        <Item label="推断约束" cls="w-[30px]">
          <Pic w={12} h={18}>
            <path d="M5 13V1.500H11V7.500H5" stroke={G} strokeWidth="1.500" />
            <rect y="12" width="6" height="6" fill={G} />
          </Pic>
        </Item>
        <Item label="动态输入" cls="w-[31px]">
          <Pic w={20} h={17} glow>
            <path d="M5 0V9M.5 4.500H9.500" stroke={B} strokeWidth="1.700" />
            <rect x="7" y="11" width="13" height="6" rx="1.500" fill={B} />
          </Pic>
        </Item>
        <div className="flex">
          <Item label="正交" cls="w-[30px]">
            <Pic w={17} h={16}>
              <path d="M1 0V15H17M1 10H7V15" stroke={G} strokeWidth="1.600" />
            </Pic>
          </Item>
          <Item label="极轴" cls="w-8">
            <Pic w={20} h={19} glow>
              <circle cx="9" cy="10" r="7.500" stroke={B} strokeWidth="2" />
              <path d="M9 10H20M9 10L16 3M14 6C16 8 16 10 16 13" stroke={B} strokeWidth="2" />
            </Pic>
          </Item>
          <Item label="极轴选项" cls="w-[18px]"><Arrow w={9} h={5} /></Item>
          <Item label="等轴测" cls="w-[30px]">
            <Pic w={22} h={24}>
              <path d="M1 2L21 22" stroke={G} strokeWidth="1.800" />
              <path d="M11 0V24" stroke="#999" />
              <path d="M3 16L19 8" stroke="#6a6a6a" strokeDasharray="3 2" />
            </Pic>
          </Item>
          <Item label="等轴测选项" cls="w-[21px]"><Arrow w={9} h={5} /></Item>
        </div>
      </Box>
    </div>
  );
}

function Man({ fill }: { fill: string }) {
  return <path d="M9 0L12 3L12 10L19 20L13.500 17.500L10 14.500L6 17.500L0 20L7 10L7 4Z" fill={fill} />;
}

function StatusBottom() {
  return (
    <div className="flex h-8 gap-px text-[15px] text-white">
      <Box>
        <div className="flex">
          <Item label="对象捕捉追踪" cls="w-8">
            <Pic w={20} h={18} glow>
              <path d="M1 17H20M1 17L17 1" stroke={B} strokeWidth="2" />
              <circle cx="8" cy="10" r="2.400" fill={B} />
            </Pic>
          </Item>
          <Item label="对象捕捉" cls="w-[29px]">
            <Pic w={19} h={19} glow>
              <rect x="3" y="3" width="15" height="15" stroke={B} strokeWidth="2" />
              <rect width="7" height="7" fill="#14541c" />
            </Pic>
          </Item>
          <Item label="捕捉设置" cls="w-[18px]"><Arrow w={9} h={5} /></Item>
        </div>
        <Item label="线宽" cls="w-[31px]">
          <Pic w={20} h={17}>
            <path d="M0 1H20" stroke={G} strokeWidth="2" />
            <path d="M0 5H20" stroke={G} />
            <path d="M0 8.500H11M12 8.500H20" stroke={G} strokeWidth="3" />
            <path d="M0 14.500H12" stroke={G} strokeWidth="4" />
          </Pic>
        </Item>
        <Item label="透明度" cls="w-[31px]">
          <Pic w={18} h={18} glow>
            <rect width="18" height="18" rx="1" fill={B} />
            <path d="M2 3H17M2 9H17M2 15H17" stroke="#15508f" strokeWidth="2" strokeDasharray="2 2" />
            <path d="M4 6H17M4 12H17" stroke="#15508f" strokeWidth="2" strokeDasharray="2 2" />
          </Pic>
        </Item>
        <Item label="选择循环" cls="w-[31px]">
          <Pic w={18} h={18}>
            <path d="M3 0V6M0 3H6" stroke={G} strokeWidth="1.400" />
            <rect x="4" y="5" width="9" height="9" fill="#999" />
            <rect x="8" y="8" width="10" height="10" fill="#92ac80" />
          </Pic>
        </Item>
        <div className="flex">
          <Item label="三维捕捉" cls="w-[30px]">
            <Pic w={18} h={19}>
              <Cube />
              <rect x="-1" y="0" width="6" height="6" fill="#0f4a18" />
            </Pic>
          </Item>
          <Item label="三维捕捉选项" cls="w-[19px]"><Arrow w={9} h={5} /></Item>
        </div>
      </Box>
      <Box>
        <div className="flex">
          <Item label="动态 UCS" cls="w-[30px]">
            <Pic w={20} h={20} glow>
              <path d="M2 1V17H20M-.5 4L2 1L4.500 4M17 14.500L20 17L17 19.500M2 17L10 9" stroke={B} strokeWidth="1.700" />
              <path d="M15 0L10 7L13 8L11 12L18 6L15 5L19 1Z" fill={B} />
            </Pic>
          </Item>
          <Item label="选择过滤" cls="w-[30px]">
            <Pic w={18} h={19}><Cube /></Pic>
          </Item>
          <Item label="过滤选项" cls="w-[19px]"><Arrow w={9} h={5} /></Item>
          <Item label="小控件" cls="w-[30px]">
            <Pic w={18} h={20}>
              <path d="M9 1L17 6V14L9 19L1 14V6Z" stroke="#999" strokeWidth="1.400" />
              <path d="M9 11V2" stroke="#4a8cf0" strokeWidth="1.800" />
              <path d="M9 11L2 15" stroke="#1b6b24" strokeWidth="2" />
              <path d="M9 11L16 15" stroke="#c93a2c" strokeWidth="2" />
              <circle cx="9" cy="2" r="1.800" fill="#4a8cf0" />
              <circle cx="1.500" cy="15" r="2" fill="#1b6b24" />
              <circle cx="17" cy="15" r="2" fill="#c93a2c" />
              <rect x="7.500" y="9.500" width="3" height="3" fill="#ddd" />
            </Pic>
          </Item>
          <Item label="小控件选项" cls="w-[19px]"><Arrow w={9} h={5} /></Item>
        </div>
      </Box>
      <Box>
        <div className="flex items-center">
          <Item label="注释可见性" cls="w-[31px]">
            <Pic w={20} h={21} glow>
              <Man fill={B} />
              <circle cx="15" cy="5" r="3" stroke={B} strokeWidth="2" />
            </Pic>
          </Item>
          <Item label="自动缩放" cls="w-[29px]">
            <Pic w={20} h={21}>
              <Man fill={G} />
              <path d="M17 1L12 6H15L13 10L19 5H16Z" fill={G} />
            </Pic>
          </Item>
          <Item label="注释比例" cls="w-[30px]">
            <Pic w={20} h={21}><Man fill={G} /></Pic>
          </Item>
          <select aria-label="比例" className="w-[84px] appearance-none bg-transparent pl-1.5 outline-none">
            <option>1:1 / 100%</option>
          </select>
          <span className="flex w-3 justify-center"><Arrow w={9} h={5} /></span>
        </div>
      </Box>
      <Box>
        <div className="flex">
          <Item label="工作空间" cls="w-[30px]">
            <Pic w={16} h={16}>
              <circle cx="8" cy="8" r="4.500" stroke={G} strokeWidth="3.500" />
              <path d="M8 0V3M8 13V16M0 8H3M13 8H16M2.300 2.300L4.500 4.500M11.500 11.500L13.700 13.700M13.700 2.300L11.500 4.500M2.300 13.700L4.500 11.500" stroke={G} strokeWidth="3" />
            </Pic>
          </Item>
          <Item label="工作空间选项" cls="w-[19px]"><Arrow w={9} h={5} /></Item>
        </div>
        <Item label="注释监视器" cls="w-[31px]">
          <Pic w={18} h={18}>
            <path d="M9 0V18M0 9H18" stroke={G} strokeWidth="2.200" />
          </Pic>
        </Item>
      </Box>
      <Box>
        <div className="flex items-center">
          <span className="flex w-[30px] justify-center">
            <Pic w={7} h={18}>
              <path d="M0 0H7V18H0Z" fill={G} />
              <path d="M4 3H7M4 6.500H7M4 10H7M4 13.500H7" stroke="#525252" />
            </Pic>
          </span>
          <select aria-label="单位" className="w-[76px] appearance-none bg-transparent pl-1.5 font-bold outline-none">
            <option>小数</option>
          </select>
          <span className="flex w-3.5"><Arrow w={9} h={5} /></span>
        </div>
        <Item label="快捷特性" cls="w-[31px]">
          <Pic w={10} h={13}>
            <rect x=".5" y=".5" width="9" height="12" stroke={G} />
            <path d="M2 3H8M2 6H8M2 9H8" stroke={G} strokeWidth="1.300" />
            <path d="M5 4V11" stroke={G} />
          </Pic>
        </Item>
      </Box>
      <Box>
        <div className="flex">
          <Item label="锁定界面" cls="w-[30px]">
            <Pic w={20} h={19}>
              <path d="M7 13H1V1H17V6M1 3H17" stroke={G} strokeWidth="1.600" />
              <rect x="7" y="11" width="9" height="8" fill={G} />
              <path d="M14 11V9C14 6 19 6 19 9V11" stroke={G} strokeWidth="1.500" />
              <path d="M11.500 13V16" stroke="#444" strokeWidth="1.500" />
            </Pic>
          </Item>
          <Item label="锁定选项" cls="w-[19px]"><Arrow w={9} h={5} /></Item>
        </div>
        <Item label="隔离对象" cls="w-[30px]">
          <Pic w={20} h={19}>
            <path d="M1 1H8V8H1ZM8 11.500L12 18H4Z" stroke="#b5b5b5" strokeWidth="1.500" />
            <circle cx="14.500" cy="8" r="4" stroke="#b5b5b5" strokeWidth="1.500" />
          </Pic>
        </Item>
      </Box>
      <Box>
        <Item label="硬件加速" cls="w-[30px]">
          <Pic w={22} h={22} glow>
            <circle cx="11" cy="11" r="10" fill="#285a96" stroke={B} strokeWidth="1.500" />
            <path d="M10 14L17 8" stroke={B} strokeWidth="2.200" />
          </Pic>
        </Item>
      </Box>
      <Box>
        <Item label="性能" cls="w-[37px]">
          <Pic w={25} h={22}>
            <rect width="23" height="19" fill="#f0f0f0" stroke="#222" />
            <path d="M2 18C7 18 6 5 11 5C16 5 16 18 21 18" stroke="#333" strokeWidth="1.400" />
            <rect x="10" y="3.500" width="2.500" height="2.500" fill="#333" />
            <path d="M20 12L25 21H15Z" fill="#d4583a" />
            <path d="M20 14.500V18M20 19V20" stroke="#fff" strokeWidth="1.200" />
          </Pic>
        </Item>
      </Box>
      <Box>
        <div className="flex">
          <Item label="全屏显示" cls="w-[31px]">
            <Pic w={20} h={15}>
              <rect x=".7" y=".7" width="18.600" height="13.600" stroke={G} strokeWidth="1.400" />
              <path d="M12 3H17V8ZM8 12H3V7Z" fill={G} />
              <path d="M15 5L11 8M5 10L9 7" stroke={G} strokeWidth="1.500" />
            </Pic>
          </Item>
          <Item label="自定义状态栏" cls="w-[30px]">
            <Pic w={19} h={15}>
              <path d="M0 1.500H19M0 7.500H19M0 13.500H19" stroke={G} strokeWidth="2.200" />
            </Pic>
          </Item>
        </div>
      </Box>
    </div>
  );
}

function Footer() {
  return (
    <footer className="border-t border-[#666] bg-[#383838]">
      <div className="flex items-start justify-between">
        <div className="flex pl-3 text-[15px]">
          <LayoutTab name="模型" on />
          <LayoutTab name="布局1" />
          <LayoutTab name="布局2" />
          <button type="button" aria-label="新建布局" className="mt-px ml-[3px] h-5">
            <Pic w={28} h={20}>
              <path d="M0 20C1 9 5 1 13 1H27V8C27 15 24 20 17 20Z" fill="#5a5a5a" stroke="#6a6a6a" />
              <path d="M14 5.500V15.500M9 10.500H19" stroke="#c2c2c4" strokeWidth="2.200" />
            </Pic>
          </button>
        </div>
        <div className="bg-[#525252] pr-px">
          <StatusTop />
        </div>
      </div>
      <div className="flex justify-end pt-px">
        <div className="bg-[#525252] pt-0.5 pr-px pb-px">
          <StatusBottom />
        </div>
      </div>
    </footer>
  );
}

export default function App() {
  return (
    <div className="flex min-h-screen flex-col border-l border-[#24507c] bg-[#383838] font-['Open_Sans','Noto_Sans_CJK_SC',sans-serif] select-none">
      <Defs />
      <Header />
      <Ribbon />
      <FileTabs />
      <Canvas />
      <Footer />
    </div>
  );
}
